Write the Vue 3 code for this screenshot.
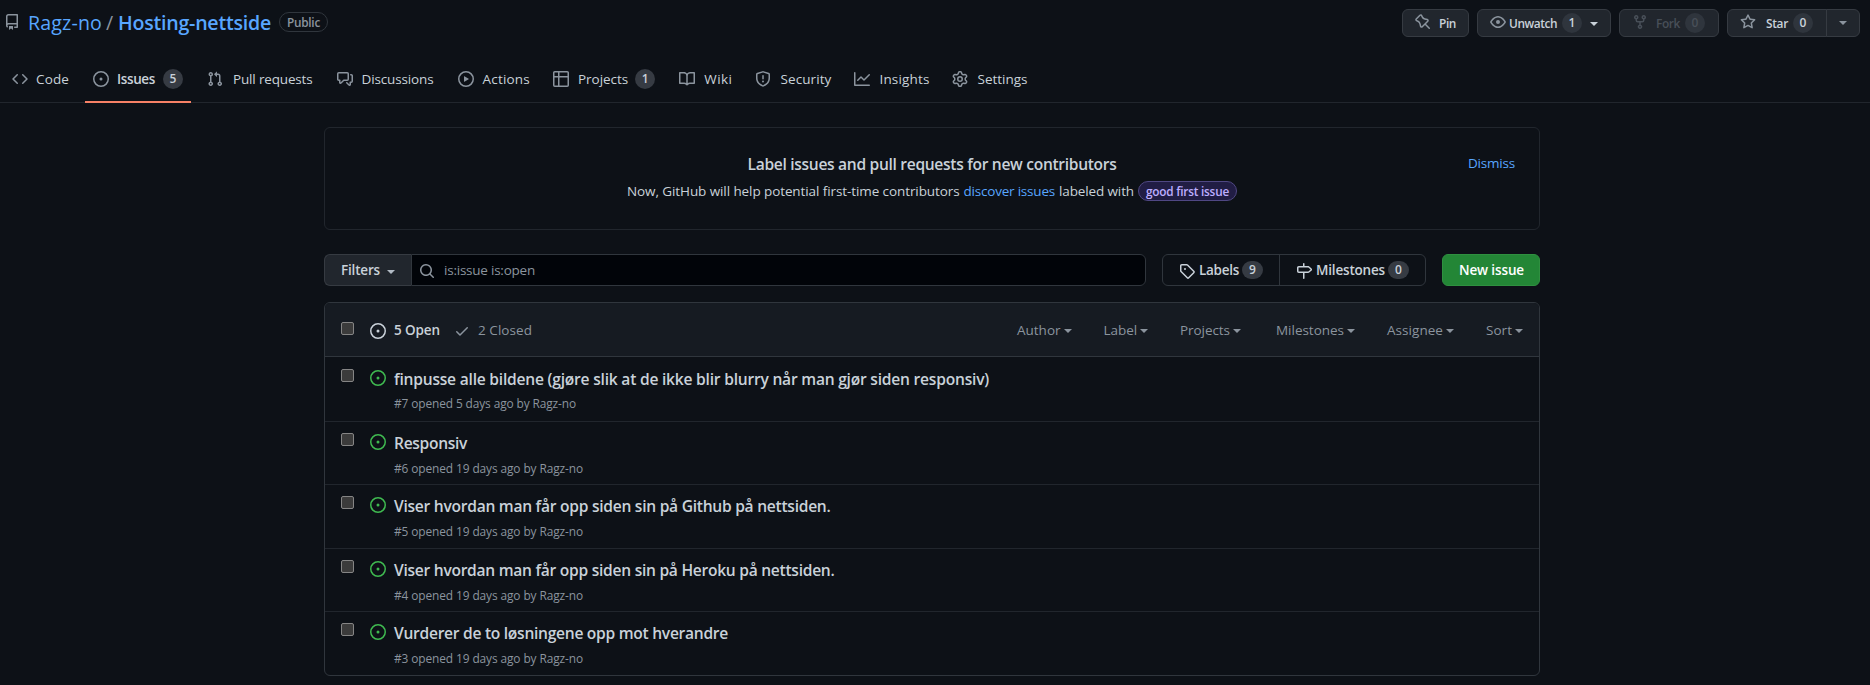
<script setup>
const icons = {
  repo: 'M2 2.5A2.5 2.5 0 014.5 0h8.75a.75.75 0 01.75.75v12.5a.75.75 0 01-.75.75h-2.5a.75.75 0 110-1.5h1.75v-2h-8a1 1 0 00-.714 1.7.75.75 0 01-1.072 1.05A2.495 2.495 0 012 11.5v-9zm10.5-1V9h-8c-.356 0-.694.074-1 .208V2.5a1 1 0 011-1h8zM5 12.25v3.25a.25.25 0 00.4.2l1.45-1.087a.25.25 0 01.3 0L8.6 15.7a.25.25 0 00.4-.2v-3.25a.25.25 0 00-.25-.25h-3.5a.25.25 0 00-.25.25z',
  code: 'M4.72 3.22a.75.75 0 011.06 1.06L2.06 8l3.72 3.72a.75.75 0 11-1.06 1.06L.47 8.53a.75.75 0 010-1.06l4.25-4.25zm6.56 0a.75.75 0 10-1.06 1.06L13.94 8l-3.72 3.72a.75.75 0 101.06 1.06l4.25-4.25a.75.75 0 000-1.06l-4.25-4.25z',
  issue: 'M8 9.5a1.5 1.5 0 100-3 1.5 1.5 0 000 3zM8 0a8 8 0 100 16A8 8 0 008 0zM1.5 8a6.5 6.5 0 1113 0 6.5 6.5 0 01-13 0z',
  pull: 'M7.177 3.073L9.573.677A.25.25 0 0110 .854v4.792a.25.25 0 01-.427.177L7.177 3.427a.25.25 0 010-.354zM3.75 2.5a.75.75 0 100 1.5.75.75 0 000-1.5zm-2.25.75a2.25 2.25 0 113 2.122v5.256a2.251 2.251 0 11-1.5 0V5.372A2.25 2.25 0 011.5 3.25zM11 2.5h-1V4h1a1 1 0 011 1v5.628a2.251 2.251 0 101.5 0V5A2.5 2.5 0 0011 2.5zm1 10.25a.75.75 0 111.5 0 .75.75 0 01-1.5 0zM3.75 12a.75.75 0 100 1.5.75.75 0 000-1.5z',
  discussion: 'M1.5 2.75a.25.25 0 01.25-.25h8.5a.25.25 0 01.25.25v5.5a.25.25 0 01-.25.25h-3.5a.75.75 0 00-.53.22L3.5 11.44V9.25a.75.75 0 00-.75-.75h-1a.25.25 0 01-.25-.25v-5.5zM1.75 1A1.75 1.75 0 000 2.75v5.5C0 9.216.784 10 1.75 10H2v1.543a1.457 1.457 0 002.487 1.03L7.061 10h3.189A1.75 1.75 0 0012 8.25v-5.5A1.75 1.75 0 0010.25 1h-8.5zM14.5 4.75a.25.25 0 00-.25-.25h-.5a.75.75 0 110-1.5h.5c.966 0 1.75.784 1.75 1.75v5.5A1.75 1.75 0 0114.25 12H14v1.543a1.457 1.457 0 01-2.487 1.03L9.22 12.28a.75.75 0 111.06-1.06l2.22 2.22v-2.19a.75.75 0 01.75-.75h1a.25.25 0 00.25-.25v-5.5z',
  play: 'M1.5 8a6.5 6.5 0 1113 0 6.5 6.5 0 01-13 0zM8 0a8 8 0 100 16A8 8 0 008 0zM6.379 5.227A.25.25 0 006 5.442v5.117a.25.25 0 00.379.214l4.264-2.559a.25.25 0 000-.428L6.379 5.227z',
  table: 'M0 1.75C0 .784.784 0 1.75 0h12.5C15.216 0 16 .784 16 1.75v12.5A1.75 1.75 0 0114.25 16H1.75A1.75 1.75 0 010 14.25V1.75zM1.5 6.5v7.75c0 .138.112.25.25.25H5v-8H1.5zM5 5H1.5V1.75a.25.25 0 01.25-.25H5V5zm1.5 1.5v8h7.75a.25.25 0 00.25-.25V6.5h-8zm8-1.5h-8V1.5h7.75a.25.25 0 01.25.25V5z',
  book: 'M0 1.75A.75.75 0 01.75 1h4.253c1.227 0 2.317.59 3 1.501A3.744 3.744 0 0111.006 1h4.245a.75.75 0 01.75.75v10.5a.75.75 0 01-.75.75h-4.507a2.25 2.25 0 00-1.591.659l-.622.621a.75.75 0 01-1.06 0l-.622-.621A2.25 2.25 0 005.258 13H.75a.75.75 0 01-.75-.75V1.75zm8.755 3a2.25 2.25 0 012.25-2.25H14.5v9h-3.757c-.71 0-1.4.201-1.992.572l.004-7.322zm-1.504 7.324l.004-5.073-.002-2.253A2.25 2.25 0 005.003 2.5H1.5v9h3.757a3.75 3.75 0 011.994.574z',
  shield: 'M7.467.133a1.75 1.75 0 011.066 0l5.25 1.68A1.75 1.75 0 0115 3.48V7c0 1.566-.32 3.182-1.303 4.682-.983 1.498-2.585 2.813-5.032 3.855a1.7 1.7 0 01-1.33 0c-2.447-1.042-4.049-2.357-5.032-3.855C1.32 10.182 1 8.566 1 7V3.48a1.75 1.75 0 011.217-1.667l5.25-1.68zm.61 1.429a.25.25 0 00-.153 0l-5.25 1.68a.25.25 0 00-.174.238V7c0 1.358.275 2.666 1.057 3.86.784 1.194 2.121 2.34 4.366 3.297a.2.2 0 00.154 0c2.245-.956 3.582-2.104 4.366-3.298C13.225 9.666 13.5 8.36 13.5 7V3.48a.25.25 0 00-.174-.237l-5.25-1.68zM9 10.5a1 1 0 11-2 0 1 1 0 012 0zm-.25-5.75a.75.75 0 10-1.5 0v3a.75.75 0 001.5 0v-3z',
  graph: 'M1.5 1.75a.75.75 0 00-1.5 0v12.5c0 .414.336.75.75.75h14.5a.75.75 0 000-1.5H1.5V1.75zm14.28 2.53a.75.75 0 00-1.06-1.06L10 7.94 7.53 5.47a.75.75 0 00-1.06 0L3.22 8.72a.75.75 0 001.06 1.06L7 7.06l2.47 2.47a.75.75 0 001.06 0l5.25-5.25z',
  eye: 'M1.679 7.932c.412-.621 1.242-1.75 2.366-2.717C5.175 4.242 6.527 3.5 8 3.5c1.473 0 2.824.742 3.955 1.715 1.124.967 1.954 2.096 2.366 2.717a.119.119 0 010 .136c-.412.621-1.242 1.75-2.366 2.717C10.825 11.758 9.473 12.5 8 12.5c-1.473 0-2.824-.742-3.955-1.715C2.92 9.818 2.09 8.69 1.679 8.068a.119.119 0 010-.136zM8 2c-1.981 0-3.67.992-4.933 2.078C1.797 5.169.88 6.423.43 7.1a1.619 1.619 0 000 1.798c.45.678 1.367 1.932 2.637 3.024C4.329 13.008 6.019 14 8 14c1.981 0 3.67-.992 4.933-2.078 1.27-1.091 2.187-2.345 2.637-3.023a1.619 1.619 0 000-1.798c-.45-.678-1.367-1.932-2.637-3.023C11.671 2.992 9.981 2 8 2zm0 8a2 2 0 100-4 2 2 0 000 4z',
  fork: 'M5 3.25a.75.75 0 11-1.5 0 .75.75 0 011.5 0zm0 2.122a2.25 2.25 0 10-1.5 0v.878A2.25 2.25 0 005.75 8.5h1.5v2.128a2.251 2.251 0 101.5 0V8.5h1.5a2.25 2.25 0 002.25-2.25v-.878a2.25 2.25 0 10-1.5 0v.878a.75.75 0 01-.75.75h-4.5A.75.75 0 015 6.25v-.878zm3.75 7.378a.75.75 0 11-1.5 0 .75.75 0 011.5 0zm3-8.75a.75.75 0 100-1.5.75.75 0 000 1.5z',
  star: 'M8 .25a.75.75 0 01.673.418l1.882 3.815 4.21.612a.75.75 0 01.416 1.279l-3.046 2.97.719 4.192a.75.75 0 01-1.088.791L8 12.347l-3.766 1.98a.75.75 0 01-1.088-.79l.72-4.194L.818 6.374a.75.75 0 01.416-1.28l4.21-.611L7.327.668A.75.75 0 018 .25zm0 2.445L6.615 5.5a.75.75 0 01-.564.41l-3.097.45 2.24 2.184a.75.75 0 01.216.664l-.528 3.084 2.769-1.456a.75.75 0 01.698 0l2.77 1.456-.53-3.084a.75.75 0 01.216-.664l2.24-2.183-3.096-.45a.75.75 0 01-.564-.41L8 2.694v.001z',
  pin: 'M4.456.734a1.75 1.75 0 012.826.504l.613 1.327a3.081 3.081 0 002.084 1.707l2.454.584c1.332.317 1.8 1.972.832 2.94L11.06 10l3.72 3.72a.75.75 0 11-1.061 1.06L10 11.06l-2.204 2.205c-.968.968-2.623.5-2.94-.832l-.584-2.454a3.081 3.081 0 00-1.707-2.084l-1.327-.613a1.75 1.75 0 01-.504-2.826L4.456.734zM5.92 1.866a.25.25 0 00-.404-.072L1.794 5.516a.25.25 0 00.072.404l1.328.613A4.582 4.582 0 015.73 9.63l.584 2.454a.25.25 0 00.42.12l5.47-5.47a.25.25 0 00-.12-.42L9.63 5.73a4.581 4.581 0 01-3.098-2.537L5.92 1.866z',
  search: 'M11.5 7a4.499 4.499 0 11-8.998 0A4.499 4.499 0 0111.5 7zm-.82 4.74a6 6 0 111.06-1.06l3.04 3.04a.75.75 0 11-1.06 1.06l-3.04-3.04z',
  tag: 'M2.5 7.775V2.75a.25.25 0 01.25-.25h5.025a.25.25 0 01.177.073l6.25 6.25a.25.25 0 010 .354l-5.025 5.025a.25.25 0 01-.354 0l-6.25-6.25a.25.25 0 01-.073-.177zm-1.5 0V2.75C1 1.784 1.784 1 2.75 1h5.025c.464 0 .91.184 1.238.513l6.25 6.25a1.75 1.75 0 010 2.474l-5.026 5.026a1.75 1.75 0 01-2.474 0l-6.25-6.25A1.75 1.75 0 011 7.775zM6 5a1 1 0 100 2 1 1 0 000-2z',
  milestone: 'M7.75 0a.75.75 0 01.75.75V3h3.634c.414 0 .814.147 1.13.414l2.07 1.75a1.75 1.75 0 010 2.672l-2.07 1.75a1.75 1.75 0 01-1.13.414H8.5v5.25a.75.75 0 11-1.5 0V10H2.75A1.75 1.75 0 011 8.25v-3.5C1 3.784 1.784 3 2.75 3H7V.75A.75.75 0 017.75 0zm0 8.5h4.384a.25.25 0 00.161-.06l2.07-1.75a.25.25 0 000-.38l-2.07-1.75a.25.25 0 00-.161-.06H2.75a.25.25 0 00-.25.25v3.5c0 .138.112.25.25.25h5z',
  check: 'M13.78 4.22a.75.75 0 010 1.06l-7.25 7.25a.75.75 0 01-1.06 0L2.22 9.28a.75.75 0 011.06-1.06L6 10.94l6.72-6.72a.75.75 0 011.06 0z',
  gear: 'M7.429 1.525a6.593 6.593 0 011.142 0c.036.003.108.036.137.146l.289 1.105c.147.56.55.967.997 1.189.174.086.341.183.501.29.417.278.97.423 1.53.27l1.102-.303c.11-.03.175.016.195.046.219.31.41.641.573.989.014.031.022.11-.059.19l-.815.806c-.411.406-.562.957-.53 1.456a4.588 4.588 0 010 .582c-.032.499.119 1.05.53 1.456l.815.806c.08.08.073.159.059.19a6.494 6.494 0 01-.573.99c-.02.029-.086.074-.195.045l-1.103-.303c-.559-.153-1.112-.008-1.529.27-.16.107-.327.204-.5.29-.449.222-.851.628-.998 1.189l-.289 1.105c-.029.11-.101.143-.137.146a6.613 6.613 0 01-1.142 0c-.036-.003-.108-.037-.137-.146l-.289-1.105c-.147-.56-.55-.967-.997-1.189a4.502 4.502 0 01-.501-.29c-.417-.278-.97-.423-1.53-.27l-1.102.303c-.11.03-.175-.016-.195-.046a6.492 6.492 0 01-.573-.989c-.014-.031-.022-.11.059-.19l.815-.806c.411-.406.562-.957.53-1.456a4.587 4.587 0 010-.582c.032-.499-.119-1.05-.53-1.456l-.815-.806c-.08-.08-.073-.159-.059-.19a6.44 6.44 0 01.573-.99c.02-.029.086-.075.195-.045l1.103.303c.559.153 1.112.008 1.529-.27.16-.107.327-.204.5-.29.449-.222.851-.628.998-1.189l.289-1.105c.029-.11.101-.143.137-.146zM8 0c-.236 0-.47.01-.701.03-.743.065-1.29.615-1.458 1.261l-.29 1.106c-.017.066-.078.158-.211.224a5.994 5.994 0 00-.668.386c-.123.082-.233.09-.3.071L3.27 2.776c-.644-.177-1.392.02-1.82.63a7.977 7.977 0 00-.704 1.217c-.315.675-.111 1.422.363 1.891l.815.806c.05.048.098.147.088.294a6.084 6.084 0 000 .772c.01.147-.038.246-.088.294l-.815.806c-.474.469-.678 1.216-.363 1.891.2.428.436.835.704 1.218.428.609 1.176.806 1.82.63l1.103-.303c.066-.019.176-.011.299.071.213.143.436.272.668.386.133.066.194.158.212.224l.289 1.106c.169.646.715 1.196 1.458 1.26a8.094 8.094 0 001.402 0c.743-.064 1.29-.614 1.458-1.26l.29-1.106c.017-.066.078-.158.211-.224a5.98 5.98 0 00.668-.386c.123-.082.233-.09.3-.071l1.102.302c.644.177 1.392-.02 1.82-.63.268-.382.505-.789.704-1.217.315-.675.111-1.422-.364-1.891l-.814-.806c-.05-.048-.098-.147-.088-.294a6.1 6.1 0 000-.772c-.01-.147.039-.246.088-.294l.814-.806c.475-.469.679-1.216.364-1.891a7.992 7.992 0 00-.704-1.218c-.428-.609-1.176-.806-1.82-.63l-1.103.303c-.066.019-.176.011-.299-.071a5.991 5.991 0 00-.668-.386c-.133-.066-.194-.158-.212-.224L10.16 1.29C9.99.645 9.444.095 8.701.031A8.094 8.094 0 008 0zm1.5 8a1.5 1.5 0 11-3 0 1.5 1.5 0 013 0zM11 8a3 3 0 11-6 0 3 3 0 016 0z',
}

const tabs = [
  { label: 'Code', icon: 'code', w: 33 },
  { label: 'Issues', icon: 'issue', w: 38, count: 5, active: true },
  { label: 'Pull requests', icon: 'pull', w: 79.5 },
  { label: 'Discussions', icon: 'discussion', w: 72 },
  { label: 'Actions', icon: 'play', w: 47.5 },
  { label: 'Projects', icon: 'table', w: 50.2, count: 1 },
  { label: 'Wiki', icon: 'book', w: 28.3 },
  { label: 'Security', icon: 'shield', w: 51 },
  { label: 'Insights', icon: 'graph', w: 50 },
  { label: 'Settings', icon: 'gear', w: 50 },
]
const filters = [
  { label: 'Author', w: 43.5 },
  { label: 'Label', w: 33.5 },
  { label: 'Projects', w: 50 },
  { label: 'Milestones', w: 68 },
  { label: 'Assignee', w: 56 },
  { label: 'Sort', w: 26 },
]
const issues = [
  { id: 7, title: 'finpusse alle bildene (gjøre slik at de ikke blir blurry når man gjør siden responsiv)', w: 595, age: '5 days', mw: 182 },
  { id: 6, title: 'Responsiv', w: 73, age: '19 days', mw: 189 },
  { id: 5, title: 'Viser hvordan man får opp siden sin på Github på nettsiden.', w: 436.5, age: '19 days', mw: 189 },
  { id: 4, title: 'Viser hvordan man får opp siden sin på Heroku på nettsiden.', w: 440.5, age: '19 days', mw: 189 },
  { id: 3, title: 'Vurderer de to løsningene opp mot hverandre', w: 334, age: '19 days', mw: 189 },
]

// Tracks the text of an element so that it fills the given width.
const vFit = {
  mounted(el, { value }) {
    el.style.display = 'inline-block'
    el.style.whiteSpace = 'nowrap'
    const natural = el.getBoundingClientRect().width
    el.style.letterSpacing = (value - natural) / el.textContent.length + 'px'
    el.style.width = value + 'px'
  },
}
</script>

<template>
  <div class="page">
    <header class="repo">
      <svg class="icon muted" viewBox="0 0 16 16"><path fill-rule="evenodd" :d="icons.repo" /></svg>
      <h1 class="name">
        <a v-fit="74">Ragz-no</a><span class="slash">/</span><a v-fit="153" class="strong">Hosting-nettside</a>
      </h1>
      <span class="public"><span v-fit="33">Public</span></span>
      <div class="actions">
        <button class="btn pin">
          <svg class="icon" viewBox="0 0 16 16"><path fill-rule="evenodd" :d="icons.pin" /></svg>
          <span v-fit="17">Pin</span>
        </button>
        <button class="btn watch">
          <svg class="icon" viewBox="0 0 16 16"><path fill-rule="evenodd" :d="icons.eye" /></svg>
          <span v-fit="48">Unwatch</span><i class="count">1</i><b class="caret"></b>
        </button>
        <button class="btn fork">
          <svg class="icon" viewBox="0 0 16 16"><path fill-rule="evenodd" :d="icons.fork" /></svg>
          <span v-fit="24">Fork</span><i class="count">0</i>
        </button>
        <div class="star-group">
          <button class="btn star">
            <svg class="icon" viewBox="0 0 16 16"><path fill-rule="evenodd" :d="icons.star" /></svg>
            <span v-fit="22">Star</span><i class="count">0</i>
          </button>
          <button class="btn star-menu"><b class="caret"></b></button>
        </div>
      </div>
    </header>

    <nav class="tabs">
      <a v-for="t in tabs" :key="t.label" class="tab" :class="{ active: t.active }">
        <svg class="icon" viewBox="0 0 16 16"><path fill-rule="evenodd" :d="icons[t.icon]" /></svg>
        <span v-fit="t.w">{{ t.label }}</span>
        <i v-if="t.count" class="count">{{ t.count }}</i>
      </a>
    </nav>

    <main class="main">
      <section class="notice">
        <a class="dismiss"><span v-fit="47">Dismiss</span></a>
        <h2><span v-fit="369">Label issues and pull requests for new contributors</span></h2>
        <p>
          <span v-fit="332.5">Now, GitHub will help potential first-time contributors</span>
          <a v-fit="91.5">discover issues</a>
          <span v-fit="75">labeled with</span>
          <span class="label"><span v-fit="83">good first issue</span></span>
        </p>
      </section>

      <div class="toolbar">
        <button class="filters"><span v-fit="39">Filters</span><b class="caret"></b></button>
        <div class="search">
          <svg class="icon" viewBox="0 0 16 16"><path fill-rule="evenodd" :d="icons.search" /></svg>
          <span v-fit="91">is:issue is:open</span>
        </div>
        <div class="subnav">
          <a class="labels">
            <svg class="icon" viewBox="0 0 16 16"><path fill-rule="evenodd" :d="icons.tag" /></svg>
            <span v-fit="40">Labels</span><i class="count">9</i>
          </a>
          <a class="milestones">
            <svg class="icon" viewBox="0 0 16 16"><path fill-rule="evenodd" :d="icons.milestone" /></svg>
            <span v-fit="69">Milestones</span><i class="count">0</i>
          </a>
        </div>
        <button class="new"><span v-fit="65">New issue</span></button>
      </div>

      <section class="list">
        <div class="list-head">
          <span class="check"></span>
          <a class="open">
            <svg class="icon" viewBox="0 0 16 16"><path fill-rule="evenodd" :d="icons.issue" /></svg>
            <span v-fit="46">5 Open</span>
          </a>
          <a class="closed">
            <svg class="icon" viewBox="0 0 16 16"><path fill-rule="evenodd" :d="icons.check" /></svg>
            <span v-fit="54">2 Closed</span>
          </a>
          <div class="selects">
            <a v-for="f in filters" :key="f.label"><span v-fit="f.w">{{ f.label }}</span><b class="caret"></b></a>
          </div>
        </div>
        <article v-for="i in issues" :key="i.id" class="row">
          <span class="check"></span>
          <svg class="icon" viewBox="0 0 16 16"><path fill-rule="evenodd" :d="icons.issue" /></svg>
          <div class="text">
            <h3><span v-fit="i.w">{{ i.title }}</span></h3>
            <p><span v-fit="i.mw">#{{ i.id }} opened {{ i.age }} ago by Ragz-no</span></p>
          </div>
        </article>
      </section>
    </main>
  </div>
</template>

<style>
html, body { background: #0d1117; }
body { overflow: hidden; }
</style>

<style scoped>
* { box-sizing: border-box; }
.page {
  height: 685px;
  background: #0d1117;
  color: #c9d1d9;
  font: 13.5px/20px "Open Sans", "Noto Sans", sans-serif;
}
h1, h2, h3, p { margin: 0; font-weight: 400; }
i { font-style: normal; }
a { color: inherit; }
button { font: inherit; color: inherit; margin: 0; }
.icon { display: block; flex: none; width: 16px; height: 16px; fill: currentColor; }
.muted { color: #8b949e; }
.caret {
  flex: none;
  width: 8px;
  border: 4px solid transparent;
  border-top-color: currentColor;
  border-bottom: 0;
}
.count {
  flex: none;
  height: 20px;
  min-width: 20px;
  border-radius: 10px;
  background: #363b43;
  font-size: 12px;
  font-weight: 600;
  line-height: 20px;
  text-align: center;
}

.repo { display: flex; align-items: flex-start; height: 56px; padding: 0 10px 0 4px; }
.repo > .icon { margin-top: 14px; }
.name { display: flex; margin: 9px 0 0 8px; font-size: 19.6px; line-height: 28px; color: #58a6ff; }
.slash { width: 16px; padding-right: 1px; text-align: center; color: #8b949e; }
.strong { font-weight: 600; }
.public {
  height: 20px;
  width: 49px;
  margin: 12px 0 0 8px;
  border: 1px solid #30363d;
  border-radius: 10px;
  color: #8b949e;
  font-size: 11.8px;
  font-weight: 600;
  line-height: 18px;
  text-align: center;
}
.actions { display: flex; gap: 8px; margin: 9px 0 0 auto; }
.btn {
  display: flex;
  align-items: center;
  height: 28px;
  padding: 0 12px;
  border: 1px solid #363b42;
  border-radius: 6px;
  background: #21262d;
  font-size: 11.9px;
  font-weight: 600;
}
.btn .icon { color: #8b949e; margin: -2px 8px 0 0; }
.btn .count { background: #2f353d; margin-left: 5px; }
.pin { width: 67px; }
.watch { width: 134px; }
.watch .icon { margin-right: 3px; }
.watch .caret { margin: 2px 0 0 8px; }
.fork { width: 100px; }
.fork { color: #484f58; }
.fork .icon { color: #484f58; }
.star-group { display: flex; }
.star { width: 100px; border-radius: 6px 0 0 6px; }
.star .icon { margin-right: 10px; }
.star-menu { width: 34px; margin-left: -1px; border-radius: 0 6px 6px 0; color: #8b949e; }

.tabs { display: flex; gap: 8px; height: 47px; padding-left: 4px; border-bottom: 1px solid #21262d; }
.tab { display: flex; align-items: center; gap: 8px; height: 47px; padding: 1px 8px 0; border-bottom: 2px solid transparent; }
.tab .icon { color: #8b949e; }
.tab:nth-child(n + 3) > span { margin: 0 -1px 0 1px; }
.tab:nth-child(3) > span { margin: 0 0 0 2px; }
.tab:nth-child(4) > span { margin-right: 0; }
.active { border-color: #f78166; font-weight: 600; }

.main { width: 1216px; margin: 24px 0 0 324px; }
.notice {
  position: relative;
  height: 103px;
  padding-top: 24px;
  border: 1px solid #21262d;
  border-radius: 6px;
  text-align: center;
}
.notice h2 { font-size: 15.6px; font-weight: 600; line-height: 24px; }
.notice p { display: flex; justify-content: center; gap: 4px; margin-top: 5px; }
.notice p a, .dismiss { color: #58a6ff; }
.dismiss { position: absolute; top: 25px; right: 24px; }
.label {
  height: 20px;
  width: 99px;
  border: 1px solid #4f4783;
  border-radius: 10px;
  background: #211d44;
  color: #bdaeff;
  font-size: 11.8px;
  font-weight: 600;
  line-height: 18px;
}

.toolbar { display: flex; height: 32px; margin-top: 24px; font-weight: 600; }
.filters {
  display: flex;
  align-items: center;
  width: 87px;
  padding: 0 0 0 16px;
  border: 1px solid #363b42;
  border-right: 0;
  border-radius: 6px 0 0 6px;
  background: #21262d;
  font-weight: 600;
}
.filters .caret { margin: 3px 0 0 7px; color: #b1bac4; }
.search {
  display: flex;
  align-items: center;
  width: 735px;
  padding-left: 7px;
  border: 1px solid #30363d;
  border-radius: 0 6px 6px 0;
  background: #010409;
  color: #8b949e;
  font-weight: 400;
}
.search .icon { margin: 1px 9px 0 0; }
.subnav { display: flex; width: 264px; margin-left: 16px; border: 1px solid #30363d; border-radius: 6px; }
.subnav a { display: flex; align-items: center; padding-left: 16px; }
.subnav .icon { margin: 2px 4px 0 0; }
.subnav .count { height: 18px; width: 21px; margin-left: 3px; line-height: 18px; }
.labels { width: 117px; border-right: 1px solid #30363d; }
.new {
  width: 98px;
  margin-left: 16px;
  padding: 0 0 0 1px;
  border: 1px solid #2f9040;
  border-radius: 6px;
  background: #238636;
  color: #fff;
  font-weight: 600;
}

.list {
  display: grid;
  grid-template-rows: 54px 64px 63px 64px 63px 64px;
  margin-top: 16px;
  border: 1px solid #30363d;
  border-radius: 6px;
  overflow: hidden;
}
.check { flex: none; width: 13px; height: 13px; border: 1px solid #858585; border-radius: 2px; background: #3b3b3b; }
.list-head {
  display: flex;
  align-items: center;
  padding: 0 16px;
  border-bottom: 1px solid #30363d;
  background: #161b22;
  color: #8b949e;
}
.list-head .check { margin-top: -3px; }
.list-head .icon { margin-top: 2px; }
.open, .closed { display: flex; align-items: center; }
.open { margin-left: 16px; gap: 8px; color: #c9d1d9; font-weight: 600; }
.closed { margin-left: 14px; gap: 8px; }
.selects { display: flex; gap: 32px; margin-left: auto; }
.selects a { display: flex; align-items: center; gap: 3px; }
.selects a:nth-child(4) { margin-left: 3px; }
.selects .caret { margin-top: 3px; }
.row { display: flex; align-items: flex-start; padding: 12px 16px 0; }
.row + .row { border-top: 1px solid #21262d; padding-top: 11px; }
.row .icon { margin: 1px 8px 0 16px; color: #3fb950; }
.row h3 { margin-top: -2px; font-size: 15.6px; font-weight: 600; line-height: 24px; }
.row p { margin-top: 4px; color: #8b949e; font-size: 11.9px; line-height: 18px; }
.row:first-of-type p { margin-top: 3px; }
</style>
